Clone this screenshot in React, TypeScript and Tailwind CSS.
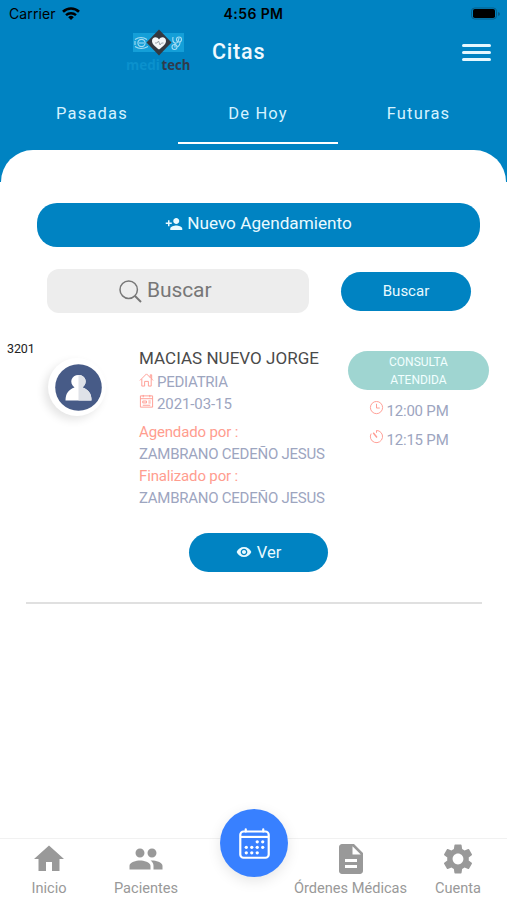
import type { ReactNode } from 'react';
import { MdDescription, MdHome, MdPeople, MdPersonAdd, MdSettings, MdVisibility } from 'react-icons/md';
import { IoCalendarOutline } from 'react-icons/io5';

function StatusBar() {
    return (
        <div className="relative flex h-7 items-center justify-between pl-[9px] pr-[6px] font-[Inter,sans-serif] text-black">
            <div className="flex items-center gap-[6px]">
                <span className="text-[14px] leading-7 tracking-[0.1px]">Carrier</span>
                <svg width="18" height="14" viewBox="0 0 18 14" fill="none" stroke="currentColor">
                    <path d="M1 4.800a11.4 11.4 0 0 1 16 0" strokeWidth="2.6" />
                    <path d="M4 8.200a7.2 7.2 0 0 1 10 0" strokeWidth="2.4" />
                    <path d="M9 13 6.2 10.200a4 4 0 0 1 5.6 0z" fill="currentColor" stroke="none" />
                </svg>
            </div>
            <span className="absolute left-1/2 -translate-x-1/2 whitespace-nowrap text-[14px] font-semibold leading-7 tracking-[0.4px]">4:56 PM</span>
            <svg width="31" height="14" viewBox="0 0 31 14">
                <rect x="1.5" y="1" width="25" height="11" rx="3.2" fill="none" stroke="#075e89" />
                <rect x="3" y="2" width="22" height="9" rx="1.8" />
                <path d="M28 5v4q2-.5 2-2t-2-2" fill="#075e89" />
            </svg>
        </div>
    );
}

function Logo() {
    return (
        <svg width="72" height="52" viewBox="0 0 72 52" className="shrink-0">
            <rect x="8" y="5" width="51" height="19" fill="#149fd8" />
            <g fill="none" stroke="#a5dcf3" strokeWidth="1.1">
                <circle cx="16.5" cy="15" r="3.6" />
                <path d="M10 11.5q6-4 12 0M10 18.500q6 4 13 0M10 13v4M14 15h5" />
                <path d="M48 9q-1 5 2 6t4-5M50 15.500v4" />
                <circle cx="49.500" cy="19" r="2.500" />
                <circle cx="54" cy="11.500" r="2.500" />
                <path d="M52 19q3-1 3-5" />
            </g>
            <path d="M34 1.500 46.500 14.500 34 27.500 21.500 14.500z" fill="#343840" />
            <path d="M34 21.500c-4-3-7-5.500-7-8.500 0-4 5-5 7-1.500 2-3.500 7-2.500 7 1.500 0 3-3 5.500-7 8.500" fill="#f4f7f9" />
            <path d="M30 15h2l1.500-2 1.500 4 1.500-2h2" fill="none" stroke="#8a939b" strokeWidth=".8" />
            <text x="1" y="41.500" fontFamily="Open Sans" fontWeight="700" fontSize="15" textLength="34" lengthAdjust="spacingAndGlyphs" fill="#0b91cd">medi</text>
            <text x="36.500" y="41.500" fontFamily="Open Sans" fontWeight="700" fontSize="15" textLength="29" lengthAdjust="spacingAndGlyphs" fill="#303b4b">tech</text>
        </svg>
    );
}

function Header() {
    return (
        <div className="flex h-[52px] items-start pl-[125px] pr-4">
            <Logo />
            <h1 className="ml-[15px] text-[21.500px] font-medium leading-[47px] tracking-[0.8px] text-[#eefaff]">Citas</h1>
            <button className="ml-auto mt-[16px] flex w-[29px] flex-col gap-[4.500px]">
                <span className="h-[2.500px] rounded bg-[#e5f8ff]" />
                <span className="h-[2.500px] rounded bg-[#e5f8ff]" />
                <span className="h-[2.500px] rounded bg-[#e5f8ff]" />
            </button>
        </div>
    );
}

function Tabs() {
    return (
        <div className="flex h-16 pl-[12px] pr-[5px] text-[16.500px] leading-[67px] tracking-[1.2px] text-[#d5f2ff]">
            <div className="w-[160px] shrink-0 text-center">Pasadas</div>
            <div className="ml-[6px] w-[160px] shrink-0 border-b-[2.500px] border-white text-center">De Hoy</div>
            <div className="w-[161px] shrink-0 text-center">Futuras</div>
        </div>
    );
}

function Line({ icon, children }: { icon: ReactNode; children: ReactNode }) {
    return (
        <p className="flex gap-[3px] whitespace-nowrap">
            <svg width="15" height="15" viewBox="0 0 16 16" fill="none" stroke="#ff9b91" className="mt-px shrink-0">
                {icon}
            </svg>
            {children}
        </p>
    );
}

function Appointment() {
    return (
        <section className="flex h-[191px] items-start text-[#9da5bf]">
            <div className="w-[138px] shrink-0">
                <p className="ml-[7px] text-[12.500px] leading-[16px] tracking-[-0.1px] text-[#222]">3201</p>
                <div className="ml-[48px] mt-px flex size-[58px] items-center justify-center rounded-full bg-white pl-[2px] shadow-[-4px_4px_9px_rgba(0,0,0,0.1)]">
                    <svg width="47" height="47" viewBox="0 0 47 47">
                        <circle cx="23.500" cy="23.500" r="23.300" fill="#475b87" />
                        <path d="M10.500 36.500c0-7 3-11 9-13-6-5-3-12.500 4-12.500s10 7.500 4 12.500c6 2 9 6 9 13z" fill="#fff" />
                        <path d="M23.500 11c7 0 10 7.500 4 12.500 6 2 9 6 9 13h-13z" fill="#dfe2e8" />
                    </svg>
                </div>
            </div>
            <div className="w-[210px] shrink-0 pl-[1px] pt-[5px] text-[15px] leading-[22px] tracking-[-0.25px]">
                <h2 className="whitespace-nowrap text-[17px] leading-[25px] tracking-[0.03px] text-[#4a4a4a]">MACIAS NUEVO JORGE</h2>
                <Line icon={<path d="M1 9 8 2l7 7M3 7.500V15h3v-5h4v5h3V7.500M12 6V3h1.500v4.500" />}>PEDIATRIA</Line>
                <Line icon={<path d="M1.500 2h13v12h-13zM1.500 5h13M4.500 1v2.500M11.500 1v2.500M4 7.500h4v2H4zM10 7.500h2.500M10 9.500h2.500M4 12h8" />}>
                    <span className="tracking-[-0.1px]">2021-03-15</span>
                </Line>
                <p className="mt-[6px] tracking-[-0.15px] text-[#ff9d8f]">Agendado por :</p>
                <p className="whitespace-nowrap">ZAMBRANO CEDEÑO JESUS</p>
                <p className="tracking-[-0.15px] text-[#ff9d8f]">Finalizado por :</p>
                <p className="whitespace-nowrap">ZAMBRANO CEDEÑO JESUS</p>
            </div>
            <div className="mt-[10px] w-[141px] shrink-0">
                <div className="flex h-[39px] flex-col items-center justify-center rounded-full bg-[#9fd5d1] text-[12px] leading-[18px] text-[#f2ffff]">
                    <span className="mt-px">CONSULTA</span>
                    <span>ATENDIDA</span>
                </div>
                <div className="flex flex-col gap-[7px] pl-[20.500px] pt-[10px] text-[15px] leading-[22px] tracking-[-0.2px]">
                    <Line icon={<><circle cx="8" cy="7" r="6.500" /><path d="M8 3v4.500h3.500" /></>}>12:00 PM</Line>
                    <Line icon={<><path d="M8 3V.5A6.500 6.500 0 1 1 2.300 3.800" /><path d="m4.500 3 4 5" strokeWidth="1.500" /></>}>12:15 PM</Line>
                </div>
            </div>
        </section>
    );
}

function NavItem({ icon, label, className }: { icon: ReactNode; label: string; className: string }) {
    return (
        <div className={`flex shrink-0 flex-col items-center ${className}`}>
            {icon}
            <span className="whitespace-nowrap leading-[22px]">{label}</span>
        </div>
    );
}

function BottomNav() {
    return (
        <nav className="relative mt-auto flex h-[62px] border-t border-[#f1f1f1] bg-white pt-[2px] text-[14.600px] text-[#999]">
            <NavItem className="w-[98px]" label="Inicio" icon={<MdHome size={36} />} />
            <NavItem className="w-[96px]" label="Pacientes" icon={<MdPeople size={36} />} />
            <NavItem className="ml-[96px] w-[121px]" label="Órdenes Médicas" icon={<MdDescription size={36} />} />
            <NavItem className="w-[94px]" label="Cuenta" icon={<MdSettings size={36} />} />
            <button className="absolute -top-[30px] left-[220px] flex size-[68px] items-center justify-center rounded-full bg-[#3880ff] text-white shadow-[0_4px_14px_rgba(0,0,0,0.1)]">
                <IoCalendarOutline size={35} />
            </button>
        </nav>
    );
}

export default function App() {
    return (
        <div className="flex h-[900px] w-[507px] flex-col overflow-hidden bg-white font-[Roboto,sans-serif]">
            <div className="h-[182px] shrink-0 bg-[#0083c2]">
                <StatusBar />
                <Header />
                <Tabs />
                <div className="mx-px mt-[6px] h-8 rounded-t-[35px] bg-white" />
            </div>
            <main className="pt-[21px]">
                <button className="ml-[37px] flex h-[44px] w-[443px] items-center justify-center gap-[4px] rounded-[20px] bg-[#0083c2] pb-[2px] text-[17.200px] text-[#e9faff]">
                    <MdPersonAdd size={18} />
                    Nuevo Agendamiento
                </button>
                <div className="mt-[22px] flex items-center pl-[47px]">
                    <div className="flex h-[44px] w-[262px] items-center gap-[5px] rounded-xl bg-[#ededed] pl-[72px] text-[21px] tracking-[-0.1px] text-[#777]">
                        <svg width="23" height="23" viewBox="0 0 23 23" fill="none" stroke="currentColor" strokeWidth="1.500">
                            <circle cx="9.700" cy="9.700" r="8.700" />
                            <path d="m16 16 6 6" strokeWidth="2" />
                        </svg>
                        Buscar
                    </div>
                    <button className="ml-[32px] h-[39px] w-[130px] rounded-full bg-[#0083c2] text-[15px] text-[#e9faff]">Buscar</button>
                </div>
                <div className="mt-[28px]">
                    <Appointment />
                </div>
                <button className="ml-[189px] mt-px flex h-[39px] w-[139px] items-center justify-center gap-[5px] rounded-full bg-[#0083c2] pt-px text-[16.500px] text-[#e9faff]">
                    <MdVisibility size={16} className="-mt-[2px]" />
                    Ver
                </button>
                <div className="ml-[26px] mt-[30px] h-[2px] w-[456px] bg-[#e0e0e0]" />
            </main>
            <BottomNav />
        </div>
    );
}
